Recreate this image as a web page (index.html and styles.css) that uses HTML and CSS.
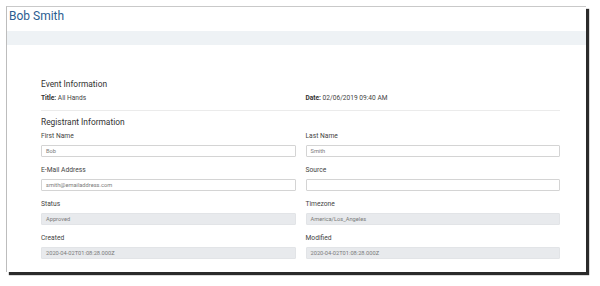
FILE: index.html
```html
<!DOCTYPE html>
<html>
<head>
<meta charset="utf-8">
<link rel="stylesheet" href="styles.css">
</head>
<body>
<div class="window">
  <div class="header"><h1 class="title">Bob Smith</h1></div>
  <div class="band"></div>
  <div class="content">
    <h2 class="section">Event Information</h2>
    <div class="info-row">
      <div class="info"><b>Title:</b> All Hands</div>
      <div class="info"><b>Date:</b> 02/06/2019 09:40 AM</div>
    </div>
    <div class="divider"></div>
    <h2 class="section section-reg">Registrant Information</h2>
    <div class="fields">
      <div class="field"><div class="label">First Name</div><div class="input">Bob</div></div>
      <div class="field"><div class="label">Last Name</div><div class="input">Smith</div></div>
      <div class="field"><div class="label">E-Mail Address</div><div class="input">smith@emailaddress.com</div></div>
      <div class="field"><div class="label">Source</div><div class="input"></div></div>
      <div class="field"><div class="label">Status</div><div class="input disabled">Approved</div></div>
      <div class="field"><div class="label">Timezone</div><div class="input disabled">America/Los_Angeles</div></div>
      <div class="field"><div class="label">Created</div><div class="input disabled">2020-04-02T01:08:28.000Z</div></div>
      <div class="field"><div class="label">Modified</div><div class="input disabled">2020-04-02T01:08:28.000Z</div></div>
    </div>
  </div>
</div>
</body>
</html>
```

FILE: styles.css
```css
html, body {
  margin: 0;
  padding: 0;
  background: #ffffff;
}
body {
  width: 600px;
  height: 286px;
  overflow: hidden;
  font-family: Roboto, "Liberation Sans", sans-serif;
}
.window {
  box-sizing: border-box;
  margin: 6px 0 0 6px;
  width: 580px;
  height: 266px;
  background: #ffffff;
  border-top: 1px solid #c9c9c9;
  border-left: 1px solid #bdbdbd;
  box-shadow: 3px 3px 1px 0 rgba(20, 20, 20, 0.9);
  display: flex;
  flex-direction: column;
}
.header {
  height: 24px;
  padding-left: 2px;
}
.title {
  margin: 0;
  font-size: 12px;
  line-height: 18px;
  font-weight: 400;
  color: #2b5d91;
}
.band {
  height: 14px;
  background: #eef2f5;
}
.content {
  padding: 32.5px 26px 0 34px;
  flex: 1;
}
.section {
  margin: 0;
  font-size: 8.4px;
  line-height: 12px;
  font-weight: 400;
  color: #333333;
}
.info-row {
  margin-top: 3px;
  display: grid;
  grid-template-columns: 1fr 1fr;
  column-gap: 10px;
}
.info {
  font-size: 6.6px;
  line-height: 10px;
  color: #444444;
}
.info b {
  font-weight: 700;
  color: #333333;
}
.divider {
  margin-top: 7px;
  border-top: 1px solid #ebebeb;
}
.section-reg {
  margin-top: 5.5px;
  margin-bottom: 2px;
}
.fields {
  display: grid;
  grid-template-columns: 1fr 1fr;
  column-gap: 10px;
  row-gap: 7.5px;
}
.label {
  font-size: 6.7px;
  line-height: 12px;
  color: #444444;
  margin-bottom: 2.5px;
}
.input {
  box-sizing: border-box;
  height: 12px;
  border: 1px solid #d4d4d4;
  border-radius: 1px;
  padding-left: 4px;
  font-size: 5.7px;
  line-height: 10px;
  color: #7a7a7a;
  background: #ffffff;
}
.input.disabled {
  background: #e8eaed;
  border-color: #e2e4e7;
}
```
